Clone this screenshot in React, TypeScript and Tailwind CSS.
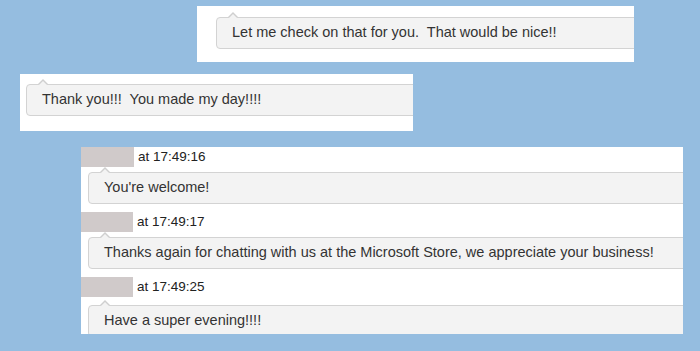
// chat transcript snippet over a blue page

import React from "react";

// a grey speech bubble with the small notch at the top left
const Bubble = ({ text }: { text: string }) => {
  return (
    <div className="relative">
      {/* notch */}
      <span className="absolute left-[12px] -top-[5px] w-0 h-0 border-x-[5px] border-x-transparent border-b-[5px] border-b-[#cfcfcf]" />
      <span className="absolute left-[13px] -top-[3.5px] w-0 h-0 border-x-[4px] border-x-transparent border-b-[4px] border-b-[#f3f3f3]" />
      <div className="h-[32px] w-[640px] flex items-center pl-[15px] bg-[#f3f3f3] border border-[#d3d3d3] rounded-[4px] text-[14.5px] text-[#333333] whitespace-pre">
        {text}
      </div>
    </div>
  );
};

// an agent line: redacted name box, time, then the bubble
const AgentMessage = ({
  time,
  text,
  nameW,
  gap = "mt-[5px]",
}: {
  time: string;
  text: string;
  nameW: string;
  gap?: string;
}) => {
  return (
    <div className="mb-[8px]">
      <div className="h-[20px] flex items-center gap-[4px]">
        <div className={`h-full ${nameW} bg-[#d0caca]`} />
        <span className="text-[13.5px] text-[#222222]">at {time}</span>
      </div>
      <div className={`${gap} ml-[7px]`}>
        <Bubble text={text} />
      </div>
    </div>
  );
};

const App = () => {
  return (
    <div
      className="w-[700px] h-[351px] overflow-hidden bg-[#95bde0] flex flex-col"
      style={{ fontFamily: '"Liberation Sans", Arial, sans-serif' }}
    >
      {/* customer line 1 */}
      <div className="mt-[6px] ml-[197px] w-[437px] h-[56px] bg-white overflow-hidden pt-[11px] pl-[19px]">
        <Bubble text={"Let me check on that for you.  That would be nice!!"} />
      </div>

      {/* customer line 2 */}
      <div className="mt-[12px] ml-[20px] w-[393px] h-[57px] bg-white overflow-hidden pt-[10px] pl-[6px]">
        <Bubble text={"Thank you!!!  You made my day!!!!"} />
      </div>

      {/* agent replies */}
      <div className="mt-[16px] ml-[81px] w-[602px] h-[187px] bg-white overflow-hidden">
        <AgentMessage nameW="w-[53px]" time="17:49:16" text="You're welcome!" />
        <AgentMessage
          nameW="w-[52px]"
          time="17:49:17"
          text="Thanks again for chatting with us at the Microsoft Store, we appreciate your business!"
        />
        <AgentMessage nameW="w-[52px]" time="17:49:25" text="Have a super evening!!!!" gap="mt-[8px]" />
      </div>
    </div>
  );
};

export default App;
